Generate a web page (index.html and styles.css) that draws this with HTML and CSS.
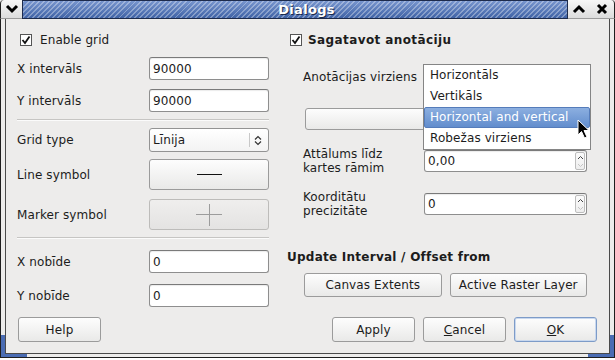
FILE: index.html
```html
<!DOCTYPE html>
<html>
<head>
<meta charset="utf-8">
<link rel="stylesheet" href="styles.css">
</head>
<body>
<div class="window">
  <div class="titlebar">
    <div class="tb-btn tb-left"><svg width="14" height="10" viewBox="0 0 14 10"><polyline points="2,2 7,7 12,2" fill="none" stroke="#000" stroke-width="3"/></svg></div>
    <div class="tb-title">Dialogs</div>
    <div class="tb-btn"><svg width="14" height="10" viewBox="0 0 14 10"><polyline points="2,8 7,3 12,8" fill="none" stroke="#000" stroke-width="3"/></svg></div>
    <div class="tb-btn tb-right"><svg width="12" height="12" viewBox="0 0 12 12"><path d="M2 2 L10 10 M10 2 L2 10" stroke="#000" stroke-width="3"/></svg></div>
  </div>
  <div class="frame">
    <div class="client">
      <div class="columns">
        <div class="col-left">
          <div class="check-row">
            <span class="checkbox"><svg width="10" height="10" viewBox="0 0 10 10"><polyline points="1.5,5 4,8 8.5,1.5" fill="none" stroke="#111" stroke-width="1.8"/></svg></span>
            <span class="check-label">Enable grid</span>
          </div>
          <div class="field-row mt5"><span class="label">X intervāls</span><div class="input">90000</div></div>
          <div class="field-row mt9"><span class="label">Y intervāls</span><div class="input">90000</div></div>
          <div class="sep"></div>
          <div class="field-row h24"><span class="label">Grid type</span>
            <div class="combo"><span class="combo-text">Līnija</span><span class="combo-sep"></span>
              <svg class="updown" width="8" height="11" viewBox="0 0 8 11"><polyline points="1,4.5 4,1.5 7,4.5" fill="none" stroke="#333" stroke-width="1.2"/><polyline points="1,6.5 4,9.5 7,6.5" fill="none" stroke="#333" stroke-width="1.2"/></svg>
            </div>
          </div>
          <div class="field-row h31 mt7"><span class="label">Line symbol</span><div class="btn sym-btn"><span class="line-sym"></span></div></div>
          <div class="field-row h31 mt9"><span class="label">Marker symbol</span>
            <div class="btn sym-btn disabled"><svg width="26" height="24" viewBox="0 0 26 24"><path d="M0 11.5 H26 M13.5 1 V23" stroke="#9c9c9c" stroke-width="1"/></svg></div>
          </div>
          <div class="sep sep2"></div>
          <div class="field-row"><span class="label">X nobīde</span><div class="input">0</div></div>
          <div class="field-row mt11"><span class="label">Y nobīde</span><div class="input">0</div></div>
        </div>
        <div class="col-right">
          <div class="check-row">
            <span class="checkbox cb-right"><svg width="10" height="10" viewBox="0 0 10 10"><polyline points="1.5,5 4,8 8.5,1.5" fill="none" stroke="#111" stroke-width="1.8"/></svg></span>
            <span class="check-label bold">Sagatavot anotāciju</span>
          </div>
          <div class="group">
            <div class="field-row"><span class="label">Anotācijas virziens</span><div class="combo wide"></div></div>
            <div class="btn font-btn"></div>
            <div class="field-row h22 mt20"><span class="label two">Attālums līdz<br>kartes rāmim</span>
              <div class="input wide spin"><span class="spin-text">0,00</span>
                <span class="spin-btns"><svg width="7" height="5" viewBox="0 0 7 5"><polyline points="1,4 3.5,1.5 6,4" fill="none" stroke="#444" stroke-width="1"/></svg><svg width="7" height="5" viewBox="0 0 7 5"><polyline points="1,1 3.5,3.5 6,1" fill="none" stroke="#c4c4c4" stroke-width="1"/></svg></span>
              </div>
            </div>
            <div class="field-row h22 mt21"><span class="label two">Koorditātu<br>precizitāte</span>
              <div class="input wide spin"><span class="spin-text">0</span>
                <span class="spin-btns"><svg width="7" height="5" viewBox="0 0 7 5"><polyline points="1,4 3.5,1.5 6,4" fill="none" stroke="#444" stroke-width="1"/></svg><svg width="7" height="5" viewBox="0 0 7 5"><polyline points="1,1 3.5,3.5 6,1" fill="none" stroke="#c4c4c4" stroke-width="1"/></svg></span>
              </div>
            </div>
          </div>
          <div class="heading">Update Interval / Offset from</div>
          <div class="btn-row">
            <div class="btn">Canvas Extents</div>
            <div class="btn">Active Raster Layer</div>
          </div>
        </div>
      </div>
      <div class="footer">
        <div class="btn fbtn help">Help</div>
        <div class="footer-right">
          <div class="btn fbtn">Apply</div>
          <div class="btn fbtn"><span><u>C</u>ancel</span></div>
          <div class="btn fbtn ok"><span><u>O</u>K</span></div>
        </div>
      </div>
    </div>
  </div>
  <div class="popup">
    <div class="item">Horizontāls</div>
    <div class="item">Vertikāls</div>
    <div class="item sel">Horizontal and vertical</div>
    <div class="item">Robežas virziens</div>
  </div>
  <svg class="cursor" width="13" height="20" viewBox="0 0 13 20"><polygon points="1,1 1,16 4.5,12.5 7.5,19 10,18 7,11.5 12,11.5" fill="#000" stroke="#fff" stroke-width="1"/></svg>
</div>
</body>
</html>
```
FILE: styles.css
```css
* { box-sizing: border-box; }
body {
  margin: 0;
  background: #ffffff;
  font-family: "DejaVu Sans", sans-serif;
  font-size: 12px;
  letter-spacing: 0.1px;
  color: #1c1c1c;
}
.window {
  position: relative;
  width: 615px;
  height: 358px;
  display: flex;
  flex-direction: column;
  background: #edeceb;
}
.titlebar {
  height: 19px;
  flex: none;
  display: flex;
}
.tb-btn {
  width: 22px;
  height: 19px;
  flex: none;
  display: flex;
  align-items: center;
  justify-content: center;
  background: linear-gradient(#f7f7f7, #dcdcdc);
  border-bottom: 1px solid #9c9c9c;
}
.tb-left {
  border-left: 1px solid #222;
  border-top-left-radius: 4px;
}
.tb-right {
  width: 25px;
  border-right: 1px solid #222;
  border-top-right-radius: 4px;
}
.tb-title {
  flex: 1;
  border: 1px solid #1d2b4c;
  background:
    repeating-linear-gradient(135deg, rgba(255,255,255,0.32) 0 1.4px, rgba(255,255,255,0) 1.4px 3.6px),
    linear-gradient(#7896cf, #4063a6);
  color: #fff;
  font-weight: bold;
  font-size: 13px;
  line-height: 17px;
  text-align: center;
  padding-left: 23px;
  letter-spacing: 0.3px;
  text-shadow: 1px 1px 0 #1b2a4d;
}
.frame {
  flex: 1;
  position: relative;
  display: flex;
  border: 1px solid #1e1e1e;
  border-top: none;
  padding: 0 4px 3px 4px;
}
.frame::before,
.frame::after {
  content: "";
  position: absolute;
  bottom: 0;
  width: 22px;
  height: 19px;
  border-bottom: 3px solid #4a6cb3;
}
.frame::before { left: 0; border-left: 4px solid #4a6cb3; }
.frame::after { right: 0; border-right: 4px solid #4a6cb3; }
.client {
  flex: 1;
  display: flex;
  flex-direction: column;
  border: 1px solid #4a4a4a;
  border-top: none;
  padding: 0 11px 11px 11px;
  position: relative;
  z-index: 1;
  background: #edeceb;
}
.columns {
  flex: 1;
  display: flex;
  gap: 17px;
}
.col-left {
  width: 252px;
  flex: none;
  padding-top: 9px;
}
.col-right {
  flex: 1;
  padding-top: 9px;
}
.check-row {
  height: 24px;
  display: flex;
  align-items: center;
}
.checkbox {
  width: 12px;
  height: 12px;
  margin-left: 3px;
  border: 1px solid #555;
  background: #fff;
  display: flex;
  align-items: center;
  justify-content: center;
}
.check-label { margin-left: 8px; }
.cb-right { margin-left: 4px; }
.bold { font-weight: bold; margin-left: 6px; letter-spacing: 0.4px; }
.field-row {
  height: 23px;
  display: flex;
  align-items: center;
  justify-content: space-between;
}
.h24 { height: 24px; }
.h31 { height: 31px; }
.h22 { height: 22px; }
.mt5 { margin-top: 5px; }
.mt7 { margin-top: 7px; }
.mt9 { margin-top: 9px; }
.mt11 { margin-top: 11px; }
.mt20 { margin-top: 20px; }
.mt21 { margin-top: 21px; }
.label { line-height: 14px; }
.input {
  width: 120px;
  height: 100%;
  background: #fff;
  border: 1px solid #8e8e8e;
  border-top-color: #7a7a7a;
  border-radius: 3px;
  box-shadow: inset 0 1px 1px rgba(0,0,0,0.08);
  padding-left: 3px;
  display: flex;
  align-items: center;
}
.input.wide, .combo.wide { width: 163px; }
.sep {
  height: 2px;
  margin: 7px 0;
  border-top: 1px solid #c6c5c3;
  border-bottom: 1px solid #fbfbfb;
}
.sep2 { margin: 7px 0 11px 0; }
.combo {
  width: 120px;
  height: 100%;
  display: flex;
  align-items: center;
  border: 1px solid #939393;
  border-radius: 3px;
  background: linear-gradient(#ffffff, #f3f3f3);
  padding-left: 3px;
}
.combo-text { flex: 1; }
.combo-sep {
  width: 1px;
  height: 14px;
  background: #c8c8c8;
  margin-right: 4px;
}
.updown { margin-right: 6px; }
.btn {
  display: flex;
  align-items: center;
  justify-content: center;
  border: 1px solid #9b9b9b;
  border-radius: 3px;
  background: linear-gradient(#fdfdfd, #e9e9e8);
}
.sym-btn {
  width: 120px;
  height: 100%;
}
.line-sym {
  width: 25px;
  height: 1px;
  background: #111;
}
.btn.disabled {
  background: linear-gradient(#efeeed, #e4e3e2);
  border-color: #bdbcba;
}
.group {
  margin-top: 13px;
  padding: 0 11px 0 17px;
}
.font-btn {
  margin: 20px 0 0 2px;
  height: 22px;
}
.spin { padding-right: 0; }
.spin-text { flex: 1; }
.spin-btns {
  width: 10px;
  height: 18px;
  margin-right: 1px;
  border: 1px solid #bdbdbd;
  border-radius: 2px;
  background: linear-gradient(#fbfbfb, #eeeeee);
  display: flex;
  flex-direction: column;
  align-items: center;
  justify-content: space-around;
}
.heading {
  margin-top: 34px;
  margin-left: 1px;
  height: 16px;
  line-height: 16px;
  font-weight: bold;
  letter-spacing: 0.25px;
}
.btn-row {
  margin-top: 8px;
  height: 24px;
  display: flex;
  gap: 8px;
  padding: 0 11px 0 18px;
}
.btn-row .btn { flex: 1; }
.footer {
  height: 25px;
  flex: none;
  display: flex;
}
.fbtn {
  width: 83px;
  height: 25px;
}
.help { margin-left: 1px; }
.footer-right {
  margin-left: auto;
  margin-right: 1px;
  display: flex;
  gap: 8px;
}
.ok {
  border-color: #7d9bc8;
  box-shadow: inset 0 0 0 1px #c9d8ee;
}
.popup {
  position: absolute;
  left: 423px;
  top: 64px;
  width: 168px;
  height: 86px;
  background: #fff;
  border: 1px solid #858585;
  z-index: 5;
}
.item {
  height: 21px;
  line-height: 21px;
  padding-left: 6px;
}
.item.sel {
  color: #fff;
  background: linear-gradient(#8cafe0, #628dcd);
  border: 1px solid #557cba;
  border-radius: 2px;
  line-height: 19px;
  padding-left: 5px;
}
.cursor {
  position: absolute;
  left: 577px;
  top: 119px;
  z-index: 6;
}
```
